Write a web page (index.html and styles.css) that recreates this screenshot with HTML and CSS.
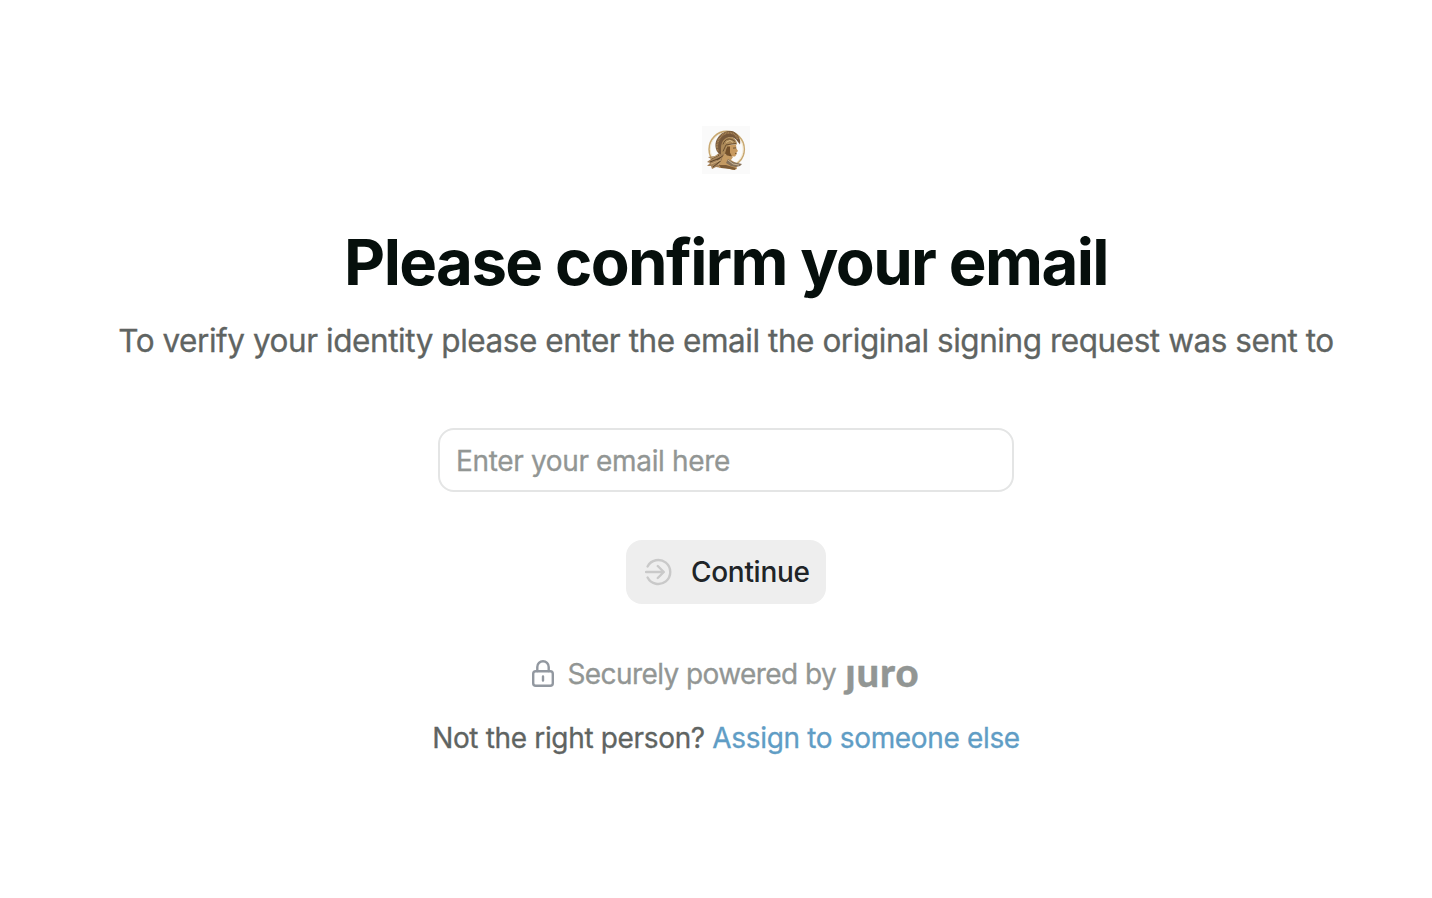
FILE: index.html
```html
<!DOCTYPE html>
<html lang="en">
<head>
    <meta charset="UTF-8">
    <meta name="viewport" content="width=device-width, initial-scale=1.0">
    <title>Please confirm your email</title>
    <link rel="stylesheet" href="styles.css">
</head>
<body>
    <main class="confirm">
        <svg class="brand" viewBox="0 0 48 48" aria-hidden="true">
            <rect width="48" height="48" fill="#fafafa"/>
            <!-- gold ring -->
            <ellipse cx="24.7" cy="23.2" rx="17.6" ry="17.8" fill="none" stroke="#c8a871" stroke-width="1.6"/>
            <ellipse cx="24.7" cy="23.2" rx="16.4" ry="16.6" fill="none" stroke="#f0e3c8" stroke-width="0.8"/>
            <!-- hair -->
            <path d="M17 27L13 30L6 31L9 33L5 36L8 37L5 40L9 40L10 43L14 41L20 42L25 34L23 26Z" fill="#a5825a"/>
            <path d="M17 29L9 33M18 32L8 36M21 33L11 41M22 29L15 34" fill="none" stroke="#5b442a" stroke-width="1"/>
            <path d="M16 29L8 33M19 34L9 38M22 34L16 39" fill="none" stroke="#d5b684" stroke-width="0.8"/>
            <!-- neck and shoulders -->
            <path d="M22 28L31 31L29 34L34 37L35 43L31 44L24 42L17 42L19 35Z" fill="#c49a62"/>
            <path d="M17 39L24 39L34 42L33 44L28 43L19 42Z" fill="#7d5c37"/>
            <path d="M26 33L31 36L40 38L38 40L34 41L29 40L24 37Z" fill="#857159"/>
            <path d="M26 34L31 38L37 39" fill="none" stroke="#d8c5a7" stroke-width="0.8"/>
            <g transform="translate(1 0.4)">
                <!-- face -->
                <path d="M24 19L33 18L33.5 22L35 24.5L33.5 26L33.5 28L32 30L27 30L23 27Z" fill="#c89a60"/>
                <path d="M24 20L27 20L27 26L29 30L24 29L21 26Z" fill="#73502b"/>
                <path d="M30 21.7L33 21.5M32 27L33.5 27" stroke="#594126" stroke-width="0.8"/>
                <!-- helmet -->
                <path d="M16 27C12 24 11 16 15 11C19 5 27 3 32 6C36 9 38 14 37 18L33 13C28 9 22 11 20 17L18 28Z" fill="#76583a"/>
                <path d="M15 25C12 17 17 8 24 6.5C29 5.5 33 8 35 13" fill="none" stroke="#a98558" stroke-width="2" stroke-dasharray="1 0.6"/>
                <path d="M18 22C18 13 24 9 30 11C33 13 34 16 34 18L28 18L24 20L22 27L18 28Z" fill="#ad8a59"/>
                <path d="M20 18C22 12 27 11 32 15M20 25L23 18.5L33 17" fill="none" stroke="#644a2d" stroke-width="0.9"/>
                <path d="M23 16L27 14L30 16" fill="none" stroke="#dcc08c" stroke-width="0.9"/>
            </g>
        </svg>

        <h1 class="title">Please confirm your email</h1>
        <p class="subtitle">To verify your identity please enter the email the original signing request was sent to</p>

        <form class="form">
            <input class="email" type="email" placeholder="Enter your email here" aria-label="Email">
            <button class="continue" type="button">
                <svg class="continue-icon" viewBox="0 0 28 28" aria-hidden="true">
                    <path d="M2.6 8.5A12 12 0 1 1 2.6 19.5M1 14H18.5M12.8 8L18.8 14L12.8 20"/>
                </svg>
                <span class="continue-label">Continue</span>
            </button>
        </form>

        <div class="powered">
            <svg class="lock" viewBox="0 0 24 28" aria-hidden="true">
                <rect x="2.2" y="11.2" width="19.6" height="14.6" rx="2.6"/>
                <path d="M6.3 11V7A5.7 5.7 0 0 1 17.7 7V11M12 16.5V20.5"/>
            </svg>
            <span class="powered-text">Securely powered by</span>
            <span class="juro">ȷuro</span>
        </div>

        <p class="reassign">Not the right person? <a class="link" href="#">Assign to someone else</a></p>
    </main>
</body>
</html>
```

FILE: styles.css
```css
body {
    margin: 0;
    background-color: #fff;
    font-family: Inter, "Liberation Sans", sans-serif;
}

.confirm {
    display: flex;
    flex-direction: column;
    align-items: center;
    box-sizing: border-box;
    min-height: 898px;
    padding: 126px 0 0 20px;
}

.brand {
    display: block;
    width: 48px;
    height: 48px;
}

.title {
    margin: 50px 0 0;
    color: #060f0c;
    font-size: 63.5px;
    font-weight: 700;
    line-height: 76px;
    letter-spacing: -1.6px;
    white-space: nowrap;
}

.subtitle {
    margin: 17px 0 0;
    color: #5f6462;
    font-size: 31.5px;
    line-height: 48px;
    letter-spacing: -0.45px;
    white-space: nowrap;
    -webkit-text-stroke: 0.3px #5f6462;
}

.form {
    display: flex;
    flex-direction: column;
    align-items: center;
    margin-top: 63px;
}

.email {
    box-sizing: border-box;
    width: 576px;
    height: 64px;
    padding: 2px 16px 0;
    border: 2px solid #e4e5e5;
    border-radius: 16px;
    background-color: #fff;
    color: #060f0c;
    font-family: inherit;
    font-size: 28px;
    letter-spacing: -0.35px;
}

.email::placeholder {
    color: #929694;
    opacity: 1;
    -webkit-text-stroke: 0.3px #929694;
}

.continue {
    display: flex;
    align-items: center;
    gap: 18px;
    box-sizing: border-box;
    width: 200px;
    height: 64px;
    margin-top: 48px;
    padding: 0 15px 0 19px;
    border: none;
    border-radius: 16px;
    background-color: #eee;
    color: #202427;
    font-family: inherit;
    font-size: 28px;
    font-weight: 500;
    letter-spacing: -0.3px;
}

.continue-icon {
    flex: none;
    width: 28px;
    height: 28px;
    fill: none;
    stroke: #c9c9c9;
    stroke-width: 2.4;
    stroke-linecap: round;
    stroke-linejoin: round;
}

.powered {
    display: flex;
    align-items: center;
    height: 40px;
    margin-top: 50px;
    padding-right: 1px;
    color: #929694;
    font-size: 28px;
    letter-spacing: -0.58px;
    -webkit-text-stroke: 0.3px #929694;
}

.lock {
    width: 24px;
    height: 28px;
    margin-right: 12px;
    fill: none;
    stroke: #9298a0;
    stroke-width: 2.4;
    stroke-linecap: round;
}

.juro {
    margin: -5px 0 0 9px;
    font-family: Lato, sans-serif;
    font-size: 40px;
    font-weight: 900;
    line-height: 40px;
    letter-spacing: 0.9px;
}

.reassign {
    margin: 24px 0 0;
    color: #5f6462;
    font-size: 28px;
    line-height: 40px;
    letter-spacing: -0.34px;
    -webkit-text-stroke: 0.3px currentColor;
}

.link {
    color: #609dc5;
    text-decoration: none;
    -webkit-text-stroke: 0.3px #609dc5;
}
```
